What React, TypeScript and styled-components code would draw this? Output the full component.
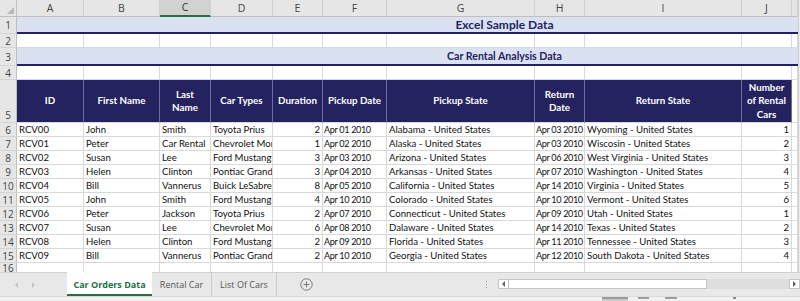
import React from 'react'
import styled, { createGlobalStyle, css } from 'styled-components'

const NAVY = '#25235f'
const GREEN = '#217346'
const GRID = '#d9d9d9'
const COLS = '17px 67px 76px 51px 62px 50px 64px 148px 50px 157px 50px 6px 2px'

const GlobalStyle = createGlobalStyle`
	html, body {
		margin: 0;
		padding: 0;
		background: #ffffff;
		overflow: hidden;
	}
	* {
		box-sizing: border-box;
	}
`

type Align = 'left' | 'right' | 'center'

const letters = ['A', 'B', 'C', 'D', 'E', 'F', 'G', 'H', 'I', 'J']

// line breaks as excel wraps them in the narrow columns
const headers = [
	'ID',
	'First Name',
	'Last\nName',
	'Car Types',
	'Duration',
	'Pickup Date',
	'Pickup State',
	'Return\nDate',
	'Return State',
	'Number\nof Rental\nCars',
]

// numeric columns sit on the right like excel does
const aligns: Align[] = ['left', 'left', 'left', 'left', 'right', 'left', 'left', 'left', 'left', 'right']
const dateCols = [5, 7]

const rows: string[][] = [
	['RCV00', 'John', 'Smith', 'Toyota Prius', '2', 'Apr 01 2010', 'Alabama - United States', 'Apr 03 2010', 'Wyoming - United States', '1'],
	['RCV01', 'Peter', 'Car Rental', 'Chevrolet Mor', '1', 'Apr 02 2010', 'Alaska - United States', 'Apr 03 2010', 'Wiscosin - United States', '2'],
	['RCV02', 'Susan', 'Lee', 'Ford Mustang', '3', 'Apr 03 2010', 'Arizona - United States', 'Apr 06 2010', 'West Virginia - United States', '3'],
	['RCV03', 'Helen', 'Clinton', 'Pontiac Grand', '3', 'Apr 04 2010', 'Arkansas - United States', 'Apr 07 2010', 'Washington - United States', '4'],
	['RCV04', 'Bill', 'Vannerus', 'Buick LeSabre', '8', 'Apr 05 2010', 'California - United States', 'Apr 14 2010', 'Virginia - United States', '5'],
	['RCV05', 'John', 'Smith', 'Ford Mustang', '4', 'Apr 10 2010', 'Colorado - United States', 'Apr 10 2010', 'Vermont - United States', '6'],
	['RCV06', 'Peter', 'Jackson', 'Toyota Prius', '2', 'Apr 07 2010', 'Connecticut - United States', 'Apr 09 2010', 'Utah - United States', '1'],
	['RCV07', 'Susan', 'Lee', 'Chevrolet Mor', '6', 'Apr 08 2010', 'Dalaware - United States', 'Apr 14 2010', 'Texas - United States', '2'],
	['RCV08', 'Helen', 'Clinton', 'Ford Mustang', '2', 'Apr 09 2010', 'Florida - United States', 'Apr 11 2010', 'Tennessee - United States', '3'],
	['RCV09', 'Bill', 'Vannerus', 'Pontiac Grand', '2', 'Apr 10 2010', 'Georgia - United States', 'Apr 12 2010', 'South Dakota - United States', '4'],
]

const tabs = ['Car Orders Data', 'Rental Car', 'List Of Cars']

export default function App() {
	return (
		<>
			<GlobalStyle />
			<Window>
				<Sheet>
					<Row $h={17}>
						<Corner>
							<CornerMark />
						</Corner>
						{letters.map((l) => (
							<ColHead key={l} $selected={l === 'C'}>
								{l}
							</ColHead>
						))}
						<ColHead $selected={false} />
						<Edge />
					</Row>

					<Row $h={17}>
						<RowHead>1</RowHead>
						<Band $pad={194} $size={12}>
							Excel Sample Data
						</Band>
						<Edge />
					</Row>

					<Row $h={14}>
						<RowHead>2</RowHead>
						{letters.map((l) => (
							<Cell key={l} $align="left" />
						))}
						<Cell $align="left" />
						<Edge />
					</Row>

					<Row $h={18}>
						<RowHead>3</RowHead>
						<Band $pad={194} $size={10.6}>
							Car Rental Analysis Data
						</Band>
						<Edge />
					</Row>

					<Row $h={14}>
						<RowHead>4</RowHead>
						{letters.map((l) => (
							<Cell key={l} $align="left" />
						))}
						<Cell $align="left" />
						<Edge />
					</Row>

					<Row $h={43}>
						<RowHead $bottom>5</RowHead>
						{headers.map((h) => (
							<HeadCell key={h}>{h}</HeadCell>
						))}
						<Cell $align="left" />
						<Edge />
					</Row>

					{rows.map((r, i) => (
						<Row $h={14} key={r[0]}>
							<RowHead>{i + 6}</RowHead>
							{r.map((v, j) => (
								<Cell key={j} $align={aligns[j]} $tight={dateCols.includes(j)}>
									{v}
								</Cell>
							))}
							<Cell $align="left" />
							<Edge />
						</Row>
					))}

					{/* last row is only partly in view above the sheet tabs */}
					<Row $h={10}>
						<RowHead>16</RowHead>
						{letters.map((l) => (
							<Cell key={l} $align="left" />
						))}
						<Cell $align="left" />
						<Edge />
					</Row>
				</Sheet>

				<TabBar>
					<NavArrows>
						<Arrow $dir="left" />
						<Arrow $dir="right" />
					</NavArrows>
					<Tabs>
						{tabs.map((t, i) => (
							<Tab key={t} $active={i === 0}>
								{t}
							</Tab>
						))}
					</Tabs>
					<AddSheet>
						<svg width="13" height="13" viewBox="0 0 13 13">
							<circle cx="6.5" cy="6.5" r="5.7" fill="none" stroke="#7a7a7a" strokeWidth="1" />
							<path d="M6.5 3.6v5.8M3.6 6.5h5.8" stroke="#7a7a7a" strokeWidth="1" />
						</svg>
					</AddSheet>
					<Splitter>
						<Dot />
						<Dot />
						<Dot />
					</Splitter>
					<HScroll>
						<ScrollButton>
							<Arrow $dir="left" $dark />
						</ScrollButton>
						<Thumb />
						<Track />
						<ScrollButton>
							<Arrow $dir="right" $dark />
						</ScrollButton>
					</HScroll>
				</TabBar>

				<StatusBar>
					<ViewButton $active $w={26} />
					<ViewButton $w={11} />
					<ViewButton $w={12} />
					<ZoomDot />
				</StatusBar>
			</Window>
		</>
	)
}

const Window = styled.div`
	width: 800px;
	height: 301px;
	display: flex;
	flex-direction: column;
	overflow: hidden;
	background: #ffffff;
`

const Sheet = styled.div`
	height: 273px;
	display: flex;
	flex-direction: column;
	overflow: hidden;
`

const Row = styled.div<{ $h: number }>`
	display: grid;
	grid-template-columns: ${COLS};
	height: ${({ $h }) => $h}px;
	flex-shrink: 0;
`

const chrome = css`
	font-family: 'Open Sans', 'Noto Sans', sans-serif;
	font-size: 10.5px;
	color: #444444;
	background: #e6e6e6;
`

const Corner = styled.div`
	${chrome};
	position: relative;
	border-right: 1px solid #bfbfbf;
	border-bottom: 1px solid #bfbfbf;
`

const CornerMark = styled.div`
	position: absolute;
	right: 2px;
	bottom: 2px;
	width: 0;
	height: 0;
	border-left: 7px solid transparent;
	border-bottom: 7px solid #b8b8b8;
`

const ColHead = styled.div<{ $selected: boolean }>`
	${chrome};
	display: flex;
	align-items: center;
	justify-content: center;
	line-height: 1;
	border-right: 1px solid #cfcfcf;
	border-bottom: 1px solid #bfbfbf;
	${({ $selected }) =>
		$selected &&
		css`
			background: #d2d2d2;
			border-bottom: 2px solid ${GREEN};
			color: #333333;
		`}
`

const RowHead = styled.div<{ $bottom?: boolean }>`
	${chrome};
	font-size: 10px;
	display: flex;
	align-items: ${({ $bottom }) => ($bottom ? 'flex-end' : 'center')};
	justify-content: center;
	padding-bottom: ${({ $bottom }) => ($bottom ? 2 : 0)}px;
	line-height: 10px;
	border-right: 1px solid #bfbfbf;
	border-bottom: 1px solid #d4d4d4;
`

const Band = styled.div<{ $pad: number; $size: number }>`
	grid-column: 2 / 13;
	display: flex;
	align-items: center;
	justify-content: center;
	padding-left: ${({ $pad }) => $pad}px;
	background: #dae2f2;
	border-bottom: 2px solid ${NAVY};
	font-family: Lato, 'Liberation Sans', sans-serif;
	font-weight: 700;
	font-size: ${({ $size }) => $size}px;
	color: ${NAVY};
	white-space: nowrap;
`

const Cell = styled.div<{ $align: Align; $tight?: boolean }>`
	padding: 0 2px;
	font-family: Lato, 'Liberation Sans', sans-serif;
	font-size: 9.6px;
	line-height: 14px;
	color: #111111;
	white-space: nowrap;
	overflow: hidden;
	text-align: ${({ $align }) => $align};
	border-right: 1px solid ${GRID};
	border-bottom: 1px solid ${GRID};
	${({ $tight }) =>
		$tight &&
		css`
			padding: 0 0 0 1px;
			font-size: 9.1px;
			letter-spacing: -0.4px;
			word-spacing: 0.2px;
		`}
`

const HeadCell = styled.div`
	display: flex;
	align-items: center;
	justify-content: center;
	padding: 0 2px;
	background: ${NAVY};
	color: #ffffff;
	font-family: Lato, 'Liberation Sans', sans-serif;
	font-weight: 700;
	font-size: 9.8px;
	line-height: 13.5px;
	text-align: center;
	white-space: pre-line;
	border-right: 1px solid #6e6c9c;
	border-bottom: 1px solid ${GRID};
`

const Edge = styled.div`
	background: #ececec;
	border-left: 1px solid #cfcfcf;
`

const TabBar = styled.div`
	height: 24px;
	display: flex;
	align-items: stretch;
	background: #e8e8e8;
	border-top: 1px solid #d0d0d0;
	flex-shrink: 0;
`

const NavArrows = styled.div`
	width: 67px;
	display: flex;
	align-items: center;
	gap: 14px;
	padding-left: 15px;
`

const Arrow = styled.span<{ $dir: 'left' | 'right'; $dark?: boolean }>`
	width: 0;
	height: 0;
	border-top: 3px solid transparent;
	border-bottom: 3px solid transparent;
	${({ $dir, $dark }) =>
		$dir === 'left'
			? css`
					border-right: 3px solid ${$dark ? '#606060' : '#c4c4c4'};
			  `
			: css`
					border-left: 3px solid ${$dark ? '#606060' : '#c4c4c4'};
			  `}
`

const Tabs = styled.div`
	display: flex;
	align-items: stretch;
`

const Tab = styled.div<{ $active: boolean }>`
	width: ${({ $active }) => ($active ? 85 : 62)}px;
	display: flex;
	align-items: center;
	justify-content: center;
	margin-top: -1px;
	font-family: 'Open Sans', 'Noto Sans', sans-serif;
	font-size: 9px;
	color: #555555;
	border-right: 1px solid #c8c8c8;
	white-space: nowrap;
	&:nth-child(2) {
		width: 60px;
	}
	&:nth-child(3) {
		width: 65px;
	}
	${({ $active }) =>
		$active &&
		css`
			background: #ffffff;
			color: ${GREEN};
			font-weight: 700;
			border-right: none;
			border-bottom: 2px solid ${GREEN};
			padding-top: 2px;
		`}
`

const AddSheet = styled.div`
	display: flex;
	align-items: center;
	margin-left: 23px;
`

const Splitter = styled.div`
	display: flex;
	flex-direction: column;
	justify-content: center;
	gap: 2px;
	margin-left: 173px;
	width: 12px;
`

const Dot = styled.span`
	width: 1px;
	height: 1px;
	background: #9a9a9a;
`

const HScroll = styled.div`
	display: flex;
	align-items: center;
	flex: 1;
	padding: 0 0 1px 0;
`

const ScrollButton = styled.div`
	width: 11px;
	height: 10px;
	display: flex;
	align-items: center;
	justify-content: center;
	background: #ffffff;
	border: 1px solid #c6c6c6;
`

const Thumb = styled.div`
	width: 198px;
	height: 10px;
	background: #ffffff;
	border: 1px solid #c6c6c6;
	border-left: none;
`

const Track = styled.div`
	flex: 1;
	height: 10px;
	background: #dddddd;
`

const StatusBar = styled.div`
	flex: 1;
	display: flex;
	align-items: flex-start;
	gap: 8px;
	padding-left: 602px;
	background: #f1f1f1;
	border-top: 1px solid #dcdcdc;
`

const ViewButton = styled.div<{ $active?: boolean; $w: number }>`
	width: ${({ $w }) => $w}px;
	height: 4px;
	margin-right: ${({ $active }) => ($active ? 2 : 8)}px;
	background: ${({ $active }) => ($active ? '#c9c9c9' : 'transparent')};
	border-top: 2px solid #9c9c9c;
`

const ZoomDot = styled.span`
	width: 3px;
	height: 2px;
	margin-left: 40px;
	background: #8a8a8a;
`
